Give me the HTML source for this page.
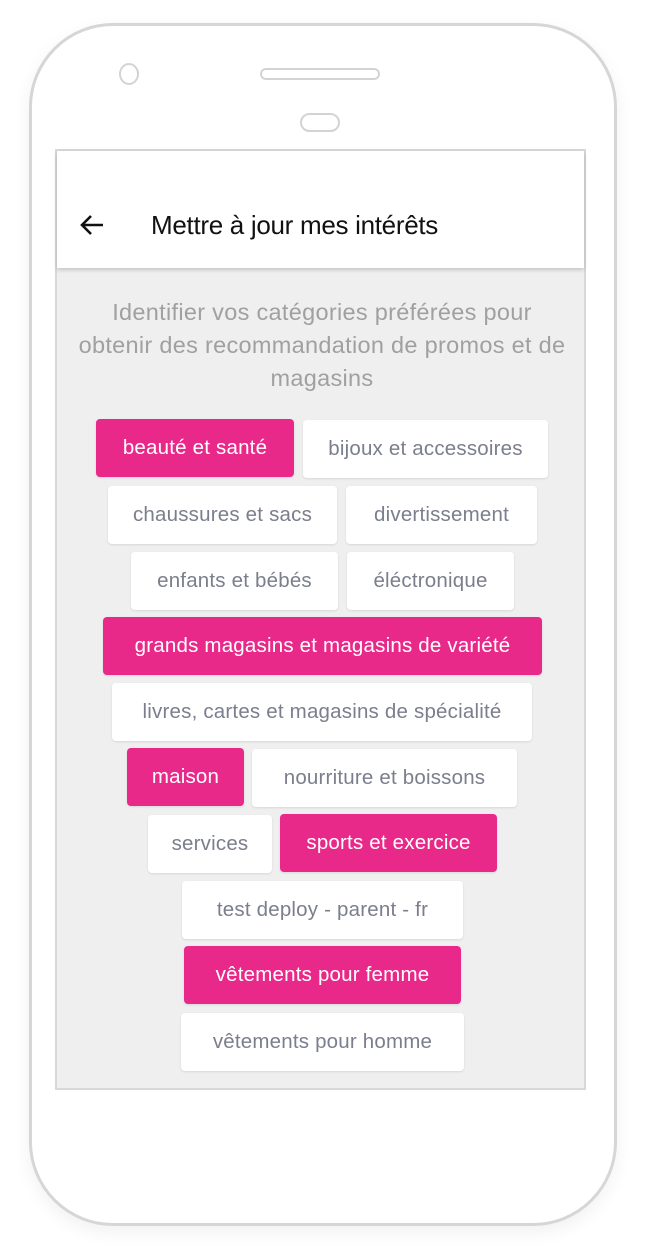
<!DOCTYPE html>
<html><head><meta charset="utf-8"><style>
*{margin:0;padding:0;box-sizing:border-box}
body{width:645px;height:1260px;background:#fff;position:relative;overflow:hidden;font-family:"Liberation Sans",sans-serif}
.phone{position:absolute;left:29px;top:23px;width:588px;height:1203px;border:3px solid #d6d6d6;border-radius:84px;background:#fff;box-shadow:0 6px 18px rgba(0,0,0,0.06)}
.cam{position:absolute;left:119px;top:63px;width:20px;height:22px;border:2px solid #d3d3d3;border-radius:50%}
.spk{position:absolute;left:260px;top:68px;width:120px;height:12px;border:2px solid #d3d3d3;border-radius:6px}
.btn{position:absolute;left:300px;top:113px;width:40px;height:19px;border:2px solid #d3d3d3;border-radius:10px}
.screen{position:absolute;left:55px;top:149px;width:531px;height:941px;background:#efefef;border:2px solid #d8d8d8}
.hdr{position:absolute;left:0;top:0;width:527px;height:117px;background:#fff;box-shadow:0 2px 4px rgba(0,0,0,0.18)}
.title{position:absolute;left:94px;top:59px;font-size:26px;color:#111;letter-spacing:-0.3px}
.intro{position:absolute;left:22px;top:296px;width:600px;text-align:center;font-size:23.5px;letter-spacing:0.3px;line-height:33px;color:#a0a0a0}
.c{position:absolute;height:58px;line-height:58px;text-align:center;font-size:20.5px;letter-spacing:0.2px;color:#7b7e8c;background:#fff;border-radius:4px;box-shadow:0 1px 2px rgba(0,0,0,0.1);white-space:nowrap}
.p{background:#e8298a;color:#fff}
</style></head><body>
<div class="phone"></div><div class="cam"></div><div class="spk"></div><div class="btn"></div>
<div class="screen"><div class="hdr">
<svg style="position:absolute;left:22px;top:62px" width="26" height="24" viewBox="0 0 26 24"><path d="M24 12H3M12 3L3 12L12 21" fill="none" stroke="#111" stroke-width="2.6"/></svg>
<div class="title">Mettre à jour mes intérêts</div></div></div>
<div class="intro">Identifier vos catégories préférées pour<br>obtenir des recommandation de promos et de<br>magasins</div>
<div class="c p" style="left:96px;top:419px;width:198px">beauté et santé</div>
<div class="c" style="left:303px;top:420px;width:245px">bijoux et accessoires</div>
<div class="c" style="left:108px;top:486px;width:229px">chaussures et sacs</div>
<div class="c" style="left:346px;top:486px;width:191px">divertissement</div>
<div class="c" style="left:131px;top:552px;width:207px">enfants et bébés</div>
<div class="c" style="left:347px;top:552px;width:167px">éléctronique</div>
<div class="c p" style="left:103px;top:617px;width:439px">grands magasins et magasins de variété</div>
<div class="c" style="left:112px;top:683px;width:420px">livres, cartes et magasins de spécialité</div>
<div class="c p" style="left:127px;top:748px;width:117px">maison</div>
<div class="c" style="left:252px;top:749px;width:265px">nourriture et boissons</div>
<div class="c" style="left:148px;top:815px;width:124px">services</div>
<div class="c p" style="left:280px;top:814px;width:217px">sports et exercice</div>
<div class="c" style="left:182px;top:881px;width:281px">test deploy - parent - fr</div>
<div class="c p" style="left:184px;top:946px;width:277px">vêtements pour femme</div>
<div class="c" style="left:181px;top:1013px;width:283px">vêtements pour homme</div>
</body></html>
